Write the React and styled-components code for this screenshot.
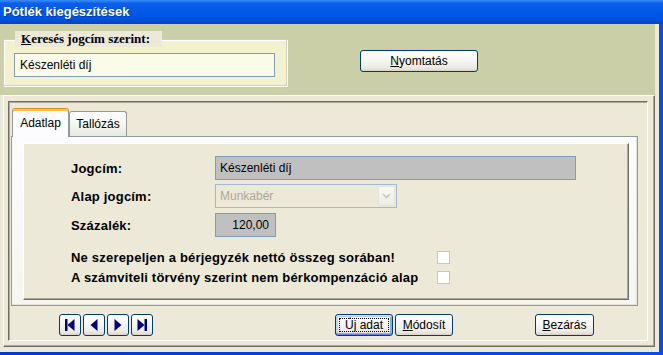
import React from "react";
import styled, { createGlobalStyle, css } from "styled-components";

const GlobalStyle = createGlobalStyle`
  html, body {
    margin: 0;
    padding: 0;
    background: #ECE9D8;
  }
  * {
    box-sizing: border-box;
  }
  body {
    font-family: "Liberation Sans", Arial, sans-serif;
    font-size: 12px;
  }
`;

const Window = styled.div`
  width: 663px;
  height: 355px;
  display: flex;
  flex-direction: column;
  background: linear-gradient(90deg, #0838C8 0%, #0B4BE8 100%);
  overflow: hidden;
`;

const TitleBar = styled.div`
  height: 24px;
  flex: none;
  display: flex;
  align-items: center;
  padding: 0 0 1px 3px;
  color: #fff;
  font: bold 13px "Liberation Sans", Arial, sans-serif;
  text-shadow: 1px 1px 0 #0A3AB0;
  background: linear-gradient(
    180deg,
    #3A8CFB 0%,
    #0A5FEA 14%,
    #0058E6 50%,
    #0053E0 80%,
    #0044C8 100%
  );
`;

const Client = styled.div`
  width: 659px;
  height: 328px;
  flex: none;
  display: flex;
  flex-direction: column;
  background: #ECE9D8;
`;

const SearchArea = styled.div`
  width: 655px;
  height: 71px;
  flex: none;
  display: flex;
  align-items: flex-start;
  padding: 7px 0 0 3px;
  background: #CBCFA7;
`;

const GroupBox = styled.fieldset`
  margin: 0;
  width: 284px;
  height: 55px;
  padding: 6px 11px 7px 10px;
  border: 1px solid #D0D0BF;
  box-shadow: inset 1px 1px 0 #fff, 1px 1px 0 #fff;
  background: #F4F1CF;
`;

const Legend = styled.legend`
  margin-left: 1px;
  padding: 0 10px 0 6px;
  width: 147px;
  height: 16px;
  line-height: 16px;
  background: #ECE9D8;
  color: #000;
  font: bold 13px "Liberation Serif", "Times New Roman", serif;
  white-space: nowrap;
`;

const SearchInput = styled.input`
  display: block;
  width: 261px;
  height: 24px;
  margin: 0;
  padding: 0 5px;
  border: 1px solid #7F9DB9;
  background: #FBFBEA;
  color: #000;
  font: 12px "Liberation Sans", Arial, sans-serif;
  outline: none;
`;

const Button = styled.button`
  position: relative;
  flex: none;
  width: ${(p) => p.$w}px;
  height: 22px;
  margin: ${(p) => p.$mt || 0}px 0 0 ${(p) => p.$ml || 0}px;
  padding: 0;
  border: 1px solid #003C74;
  border-radius: 3px;
  background: linear-gradient(
    180deg,
    #FFFFFF 0%,
    #F5F5F1 50%,
    #EAE9E2 85%,
    #D8D3C8 100%
  );
  color: #000;
  font: 12px "Liberation Sans", Arial, sans-serif;
  display: flex;
  align-items: center;
  justify-content: center;
  ${(p) =>
    p.$focused &&
    css`
      box-shadow: inset 0 1px 0 #CEE7FF, inset 0 -1px 0 #6982EE,
        inset 1px 0 0 #BCD4F6, inset -1px 0 0 #89ADE4,
        inset 0 2px 0 #BCD4F6, inset 0 -2px 0 #89ADE4,
        inset 2px 0 0 #BCD4F6, inset -2px 0 0 #89ADE4;
      &::after {
        content: "";
        position: absolute;
        inset: 3px 3px 3px 3px;
        border: 1px dotted #000;
      }
    `}
`;

const LowerArea = styled.div`
  flex: 1;
  padding: 0 0 0 3px;
`;

const RaisedFrame = styled.div`
  width: 652px;
  height: 252px;
  padding: 5px 0 0 4px;
  border: 1px solid;
  border-color: #fff #716F64 #716F64 #fff;
  box-shadow: inset -1px -1px 0 #ACA899;
`;

const SunkenFrame = styled.div`
  width: 640px;
  height: 240px;
  display: flex;
  flex-direction: column;
  padding: 6px 0 0 2px;
  border: 1px solid;
  border-color: #716F64 #fff #fff #716F64;
  box-shadow: inset 1px 1px 0 #ACA899;
`;

const TabStrip = styled.div`
  height: 28px;
  display: flex;
  align-items: flex-end;
  padding-left: 1px;
`;

const Tab = styled.div`
  position: relative;
  z-index: ${(p) => (p.$active ? 2 : 0)};
  width: ${(p) => p.$w}px;
  height: ${(p) => (p.$active ? 29 : 25)}px;
  margin-bottom: ${(p) => (p.$active ? -1 : 0)}px;
  display: flex;
  align-items: center;
  justify-content: center;
  padding-bottom: ${(p) => (p.$active ? 1 : 0)}px;
  border: 1px solid #919B9C;
  border-bottom: none;
  border-radius: 3px 3px 0 0;
  color: #000;
  font: 12px "Liberation Sans", Arial, sans-serif;
  background: ${(p) =>
    p.$active ? "#FCFCFE" : "linear-gradient(180deg, #FFFFFF 0%, #F3F3EF 60%, #E8E7E0 100%)"};
  ${(p) =>
    p.$active &&
    css`
      border-top: 1px solid #E68B2C;
      box-shadow: inset 0 2px 0 #FFC73C;
    `}
`;

const TabPanel = styled.div`
  position: relative;
  z-index: 1;
  width: 627px;
  height: 170px;
  padding: 6px 0 0 11px;
  border: 1px solid #919B9C;
  background: linear-gradient(180deg, #FCFCFE 0%, #F6F5F1 100%);
  box-shadow: inset -1px -1px 0 #E3E2DA;
`;

const InnerPanel = styled.div`
  width: 606px;
  height: 157px;
  display: flex;
  flex-direction: column;
  padding: 12px 0 0 47px;
  background: #ECE9D8;
  border: 1px solid;
  border-color: #fff #716F64 #716F64 #fff;
  box-shadow: inset -1px -1px 0 #ACA899;
`;

const Row = styled.div`
  display: flex;
  align-items: center;
  height: ${(p) => p.$h}px;
  margin-top: ${(p) => p.$mt || 0}px;
`;

const Label = styled.div`
  flex: none;
  width: ${(p) => p.$w}px;
  color: #000;
  font: bold 13px "Liberation Sans", Arial, sans-serif;
  letter-spacing: 0.2px;
  white-space: nowrap;
`;

const Field = styled.input`
  display: block;
  width: ${(p) => p.$w}px;
  height: 24px;
  margin: 0;
  padding: 0 6px 0 4px;
  border: 1px solid #7F9DB9;
  background: #C0C0C0;
  color: #000;
  font: 12px "Liberation Sans", Arial, sans-serif;
  text-align: ${(p) => (p.$right ? "right" : "left")};
  outline: none;
`;

const Combo = styled.div`
  width: 182px;
  height: 24px;
  display: flex;
  align-items: center;
  justify-content: space-between;
  padding: 1px 1px 1px 4px;
  border: 1px solid #A5B8CC;
  background: #ECE9D8;
  color: #ACA899;
  font: 12px "Liberation Sans", Arial, sans-serif;
`;

const ComboButton = styled.div`
  width: 17px;
  height: 20px;
  display: flex;
  align-items: center;
  justify-content: center;
  border: 1px solid #E4E3DC;
  border-radius: 2px;
  background: linear-gradient(180deg, #F8F8F5 0%, #EEEDE7 100%);
`;

const CheckBox = styled.div`
  flex: none;
  width: 13px;
  height: 13px;
  border: 1px solid #C9C7BA;
  background: #fff;
`;

const BottomBar = styled.div`
  display: flex;
  height: 22px;
  margin-top: 8px;
`;

const NavIcon = ({ kind }) => {
  const c = "#000080";
  return (
    <svg width="20" height="20" viewBox="0 0 20 20">
      {kind === "first" && (
        <>
          <rect x="5" y="4" width="2.5" height="12" fill={c} />
          <polygon points="7.5,10 14.5,4 14.5,16" fill={c} />
        </>
      )}
      {kind === "prev" && <polygon points="6.5,10 13.5,4 13.5,16" fill={c} />}
      {kind === "next" && <polygon points="6.5,4 13.5,10 6.5,16" fill={c} />}
      {kind === "last" && (
        <>
          <polygon points="5.5,4 12.5,10 5.5,16" fill={c} />
          <rect x="12.5" y="4" width="2.5" height="12" fill={c} />
        </>
      )}
    </svg>
  );
};

const Chevron = () => (
  <svg width="9" height="6" viewBox="0 0 9 6">
    <polyline points="1,1 4.5,4.5 8,1" fill="none" stroke="#C9C7BA" strokeWidth="1.6" />
  </svg>
);

export default function App() {
  return (
    <>
      <GlobalStyle />
      <Window>
        <TitleBar>Pótlék kiegészítések</TitleBar>
        <Client>
          <SearchArea>
            <GroupBox>
              <Legend>
                <u>K</u>eresés jogcím szerint:
              </Legend>
              <SearchInput readOnly value="Készenléti díj" />
            </GroupBox>
            <Button $w={118} $ml={73} $mt={19}>
              <span>
                <u>N</u>yomtatás
              </span>
            </Button>
          </SearchArea>
          <LowerArea>
            <RaisedFrame>
              <SunkenFrame>
                <TabStrip>
                  <Tab $active $w={57}>
                    Adatlap
                  </Tab>
                  <Tab $w={58}>Tallózás</Tab>
                </TabStrip>
                <TabPanel>
                  <InnerPanel>
                    <Row $h={24}>
                      <Label $w={144}>Jogcím:</Label>
                      <Field $w={361} readOnly value="Készenléti díj" />
                    </Row>
                    <Row $h={24} $mt={4}>
                      <Label $w={144}>Alap jogcím:</Label>
                      <Combo>
                        <span>Munkabér</span>
                        <ComboButton>
                          <Chevron />
                        </ComboButton>
                      </Combo>
                    </Row>
                    <Row $h={24} $mt={5}>
                      <Label $w={144}>Százalék:</Label>
                      <Field $w={61} $right readOnly value="120,00" />
                    </Row>
                    <Row $h={20} $mt={10}>
                      <Label $w={366}>Ne szerepeljen a bérjegyzék nettó összeg sorában!</Label>
                      <CheckBox />
                    </Row>
                    <Row $h={20}>
                      <Label $w={366}>A számviteli törvény szerint nem bérkompenzáció alap</Label>
                      <CheckBox />
                    </Row>
                  </InnerPanel>
                </TabPanel>
                <BottomBar>
                  <Button $w={22} $ml={48}>
                    <NavIcon kind="first" />
                  </Button>
                  <Button $w={22} $ml={2}>
                    <NavIcon kind="prev" />
                  </Button>
                  <Button $w={22} $ml={2}>
                    <NavIcon kind="next" />
                  </Button>
                  <Button $w={22} $ml={2}>
                    <NavIcon kind="last" />
                  </Button>
                  <Button $w={58} $ml={182} $focused>
                    <span>
                      Ú<u>j</u> adat
                    </span>
                  </Button>
                  <Button $w={58} $ml={2}>
                    <span>
                      <u>M</u>ódosít
                    </span>
                  </Button>
                  <Button $w={59} $ml={82}>
                    <span>
                      <u>B</u>ezárás
                    </span>
                  </Button>
                </BottomBar>
              </SunkenFrame>
            </RaisedFrame>
          </LowerArea>
        </Client>
      </Window>
    </>
  );
}
